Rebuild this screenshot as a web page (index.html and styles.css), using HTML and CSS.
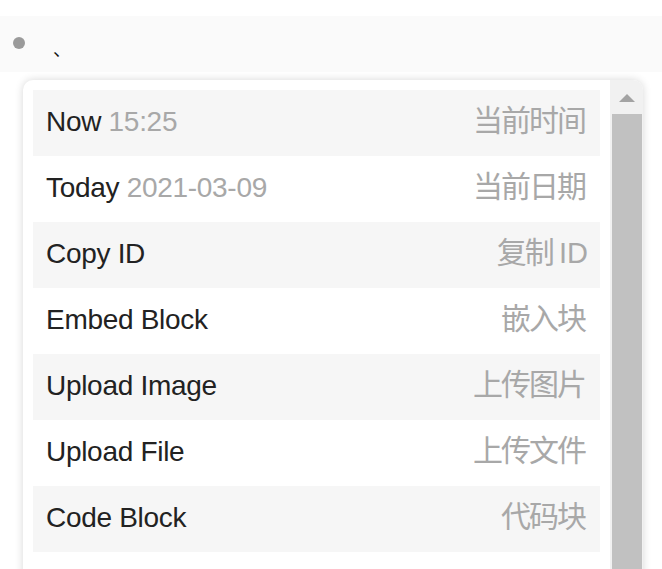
FILE: index.html
```html
<!DOCTYPE html>
<html lang="zh-CN">
<head>
<meta charset="utf-8">
<title>Slash menu</title>
<link rel="stylesheet" href="styles.css">
</head>
<body>
<div class="block">
  <span class="bullet"></span>
  <span class="block-text">、</span>
</div>
<div class="menu">
  <div class="list">
    <div class="row alt"><span class="name">Now <span class="meta">15:25</span></span><span class="hint">当前时间</span></div>
    <div class="row"><span class="name">Today <span class="meta">2021-03-09</span></span><span class="hint">当前日期</span></div>
    <div class="row alt"><span class="name">Copy ID</span><span class="hint">复制 <span class="latin">ID</span></span></div>
    <div class="row"><span class="name">Embed Block</span><span class="hint">嵌入块</span></div>
    <div class="row alt"><span class="name">Upload Image</span><span class="hint">上传图片</span></div>
    <div class="row"><span class="name">Upload File</span><span class="hint">上传文件</span></div>
    <div class="row alt"><span class="name">Code Block</span><span class="hint">代码块</span></div>
  </div>
  <div class="scrollbar">
    <span class="arrow"></span>
    <span class="thumb"></span>
  </div>
</div>
</body>
</html>
```
FILE: styles.css
```css
html, body {
  margin: 0;
  padding: 0;
  background: #ffffff;
  overflow: hidden;
  height: 569px;
}
body {
  font-family: "Liberation Sans", Arial, "Noto Sans CJK SC", sans-serif;
  color: #222222;
}
.block {
  margin-top: 16px;
  height: 56px;
  background: #fafafa;
  display: flex;
  align-items: center;
  padding-left: 13px;
  box-sizing: border-box;
}
.bullet {
  width: 12px;
  height: 12px;
  border-radius: 50%;
  background: #9a9a9a;
  margin-top: -2px;
}
.block-text {
  margin-left: 28px;
  font-family: "Noto Sans CJK SC", sans-serif;
  font-size: 18px;
  line-height: 20px;
  color: #111;
  margin-top: 8px;
}
.menu {
  margin: 8px 19px 0 23px;
  height: 520px;
  border-radius: 10px;
  box-shadow: 0 0 8px rgba(0, 0, 0, 0.16);
  background: #ffffff;
  display: flex;
  overflow: hidden;
}
.list {
  flex: 1;
  padding: 10px 10px 0 10px;
  min-width: 0;
}
.row {
  height: 66px;
  display: flex;
  align-items: center;
  justify-content: space-between;
  padding: 0 12px 0 13px;
  font-size: 28px;
  white-space: nowrap;
}
.row.alt {
  background: #f6f6f6;
}
.name {
  color: #222222;
  letter-spacing: -0.3px;
  padding-bottom: 2px;
}
.meta {
  color: #a8a8a8;
}
.hint {
  color: #a8a8a8;
  font-family: "Liberation Sans", "Noto Sans CJK SC", sans-serif;
  font-size: 30px;
  letter-spacing: -2px;
  margin-right: 3px;
  line-height: 34px;
  padding-bottom: 5px;
}
.hint .latin {
  font-size: 29px;
  letter-spacing: 0;
  margin-right: -3px;
}
.scrollbar {
  width: 33px;
  background: #f1f1f1;
  display: flex;
  flex-direction: column;
  align-items: center;
  padding: 0 1px 0 2px;
  box-sizing: border-box;
}
.arrow {
  margin-top: 14px;
  width: 0;
  height: 0;
  border-left: 8px solid transparent;
  border-right: 8px solid transparent;
  border-bottom: 8px solid #a3a3a3;
}
.thumb {
  margin-top: 12px;
  width: 30px;
  flex: 1;
  background: #c1c1c1;
}
```
